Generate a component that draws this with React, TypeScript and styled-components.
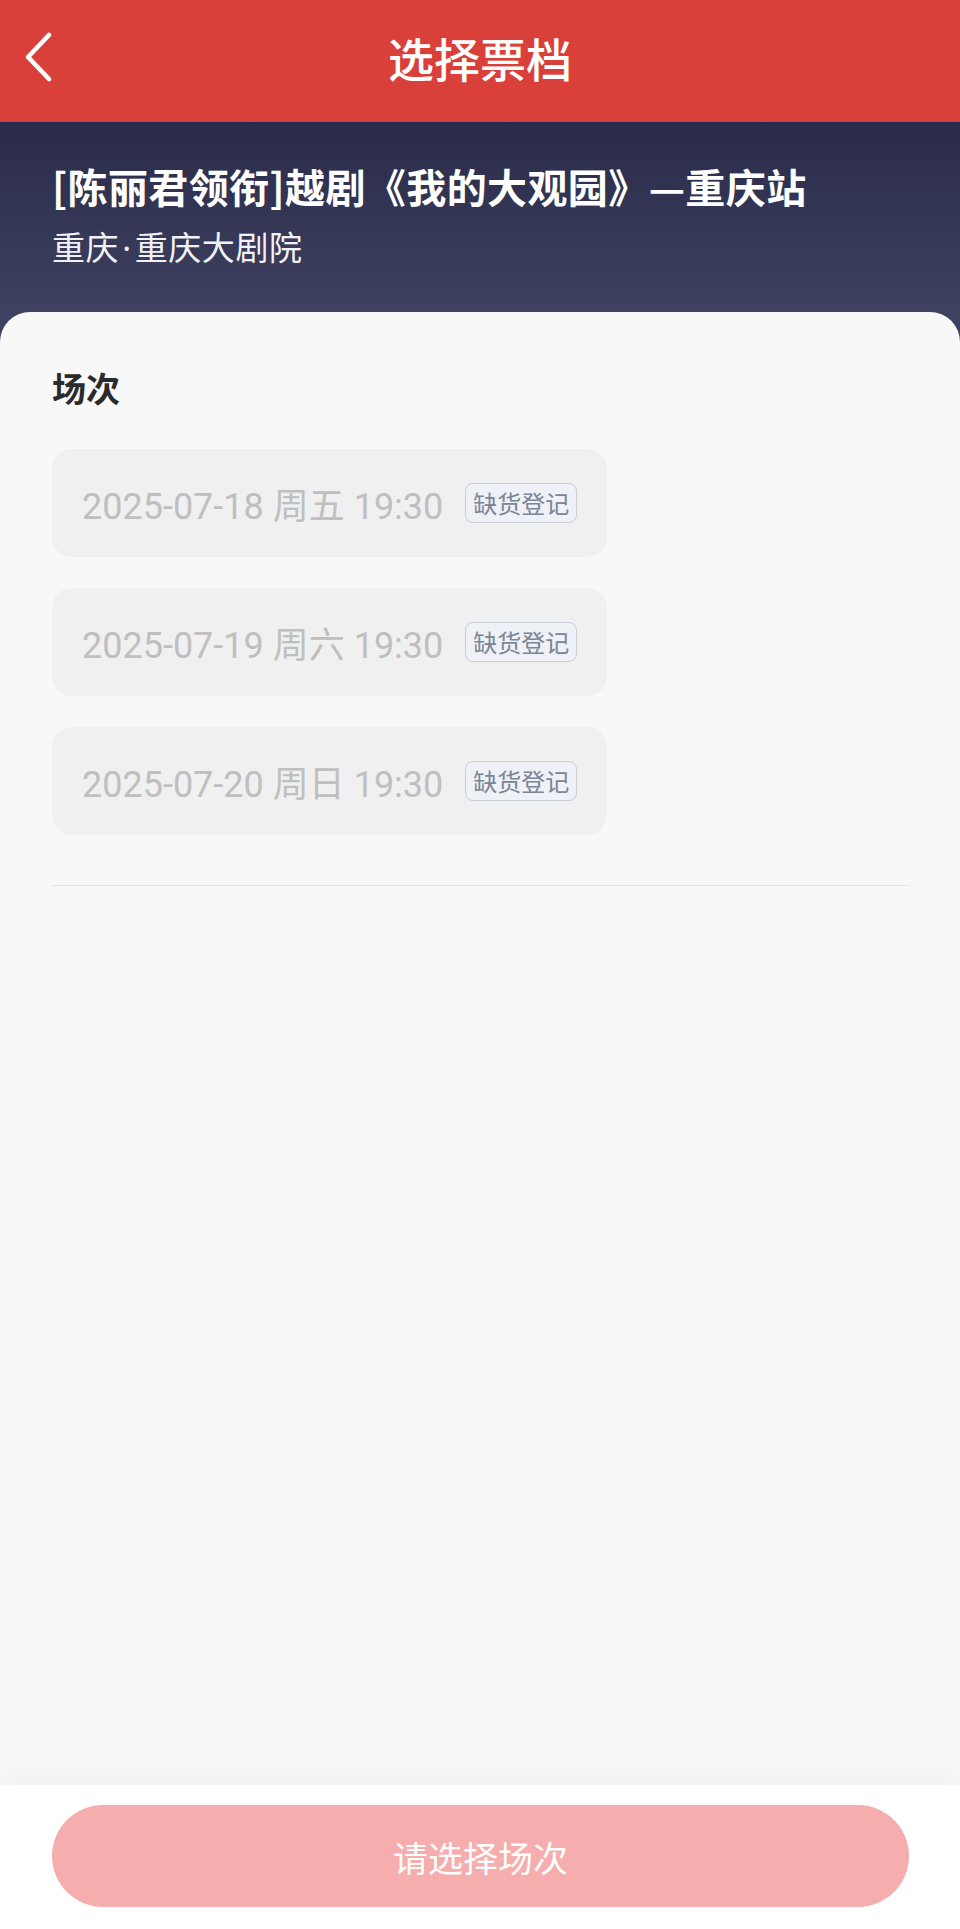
import React from "react";
import styled, { createGlobalStyle } from "styled-components";

const sessions = [
    { date: "2025-07-18", week: "周五", time: "19:30" },
    { date: "2025-07-19", week: "周六", time: "19:30" },
    { date: "2025-07-20", week: "周日", time: "19:30" },
];

const GlobalStyle = createGlobalStyle`
    html, body {
        margin: 0;
        padding: 0;
        background: #f8f8f8;
    }
    * {
        box-sizing: border-box;
    }
    body {
        font-family: "Noto Sans CJK SC", "Noto Sans", sans-serif;
    }
`;

const BackIcon = () => (
    <svg width="32" height="52" viewBox="0 0 32 52" fill="none">
        <polyline
            points="26,4 5,26 26,48"
            stroke="#ffffff"
            strokeWidth="4.6"
            strokeLinecap="round"
            strokeLinejoin="round"
        />
    </svg>
);

const App: React.FC = () => {
    return (
        <Style.Page>
            <GlobalStyle />
            <Style.Header>
                <Style.BackButton aria-label="返回">
                    <BackIcon />
                </Style.BackButton>
                <Style.HeaderTitle>选择票档</Style.HeaderTitle>
                <span />
            </Style.Header>

            <Style.Body>
                <Style.Info>
                    <Style.EventTitle>[陈丽君领衔]越剧《我的大观园》—重庆站</Style.EventTitle>
                    <Style.Venue>
                        重庆<Style.Dot>·</Style.Dot>重庆大剧院
                    </Style.Venue>
                </Style.Info>

                <Style.Card>
                    <Style.SectionLabel>场次</Style.SectionLabel>
                    <Style.SessionList>
                        {sessions.map((s) => (
                            <Style.SessionPill key={s.date}>
                                <Style.SessionText>
                                    {s.date} {s.week} {s.time}
                                </Style.SessionText>
                                <Style.Tag>缺货登记</Style.Tag>
                            </Style.SessionPill>
                        ))}
                    </Style.SessionList>
                    <Style.Divider />
                </Style.Card>
            </Style.Body>

            <Style.Footer>
                <Style.SubmitButton disabled>请选择场次</Style.SubmitButton>
            </Style.Footer>
        </Style.Page>
    );
};

export default App;

const Style = {
    Page: styled.div`
        width: 960px;
        min-height: 1929px;
        display: flex;
        flex-direction: column;
        background: #f8f8f8;
    `,

    Header: styled.header`
        height: 122px;
        background: #da403a;
        display: grid;
        grid-template-columns: 1fr auto 1fr;
        align-items: center;
        padding: 0 0 8px 23px;
    `,

    BackButton: styled.button`
        width: 40px;
        height: 60px;
        padding: 0;
        border: none;
        background: transparent;
        display: flex;
        align-items: center;
        cursor: pointer;
    `,

    HeaderTitle: styled.h1`
        margin: 0;
        padding-right: 23px;
        color: #ffffff;
        font-size: 46px;
        font-weight: 500;
        line-height: 1;
    `,

    Body: styled.div`
        flex: 1;
        display: flex;
        flex-direction: column;
        background: #3e415f;
    `,

    Info: styled.div`
        height: 190px;
        padding: 38px 52px 0;
        background: linear-gradient(180deg, #2a2b4a 0%, #3e415f 100%);
    `,

    EventTitle: styled.h2`
        margin: 0;
        color: #ffffff;
        font-size: 40px;
        font-weight: 700;
        line-height: 52px;
        letter-spacing: 0.4px;
        white-space: nowrap;
    `,

    Venue: styled.div`
        margin-top: 16px;
        color: #f2f2f6;
        font-family: "Noto Sans", "Noto Sans CJK SC", sans-serif;
        font-size: 33px;
        font-weight: 400;
        line-height: 40px;
        letter-spacing: 0.6px;
    `,

    Dot: styled.span`
        padding: 0 3px;
    `,

    Card: styled.main`
        flex: 1;
        background: #f8f8f8;
        border-radius: 30px 30px 0 0;
        padding: 55px 52px 0 52px;
        display: flex;
        flex-direction: column;
    `,

    SectionLabel: styled.div`
        color: #2b2b2b;
        font-size: 34px;
        font-weight: 700;
        line-height: 41px;
    `,

    SessionList: styled.div`
        margin-top: 41px;
        display: flex;
        flex-direction: column;
        align-items: flex-start;
        gap: 31px;
    `,

    SessionPill: styled.div`
        height: 108px;
        padding: 0 30px;
        display: inline-flex;
        align-items: center;
        gap: 22px;
        background: #f0f0f0;
        border-radius: 20px;
    `,

    SessionText: styled.span`
        color: #bfbfbf;
        font-family: Roboto, "Noto Sans CJK SC", sans-serif;
        font-size: 36px;
        font-weight: 400;
        white-space: pre;
    `,

    Tag: styled.span`
        height: 40px;
        padding: 0 7px;
        display: inline-flex;
        align-items: center;
        border: 1.5px solid #c9ced7;
        border-radius: 8px;
        background: #eef1f5;
        color: #7a8598;
        font-size: 24px;
        line-height: 1;
    `,

    Divider: styled.div`
        margin-top: 50px;
        width: 858px;
        height: 1px;
        background: #e6e6e6;
    `,

    Footer: styled.footer`
        height: 144px;
        padding: 20px 51px 0 52px;
        background: #ffffff;
        box-shadow: 0 -8px 26px rgba(0, 0, 0, 0.035);
    `,

    SubmitButton: styled.button`
        width: 100%;
        height: 102px;
        border: none;
        border-radius: 51px;
        background: #f5adad;
        color: #ffffff;
        font-family: "Noto Sans CJK SC", sans-serif;
        font-size: 35px;
        font-weight: 400;
        cursor: default;
    `,
};
